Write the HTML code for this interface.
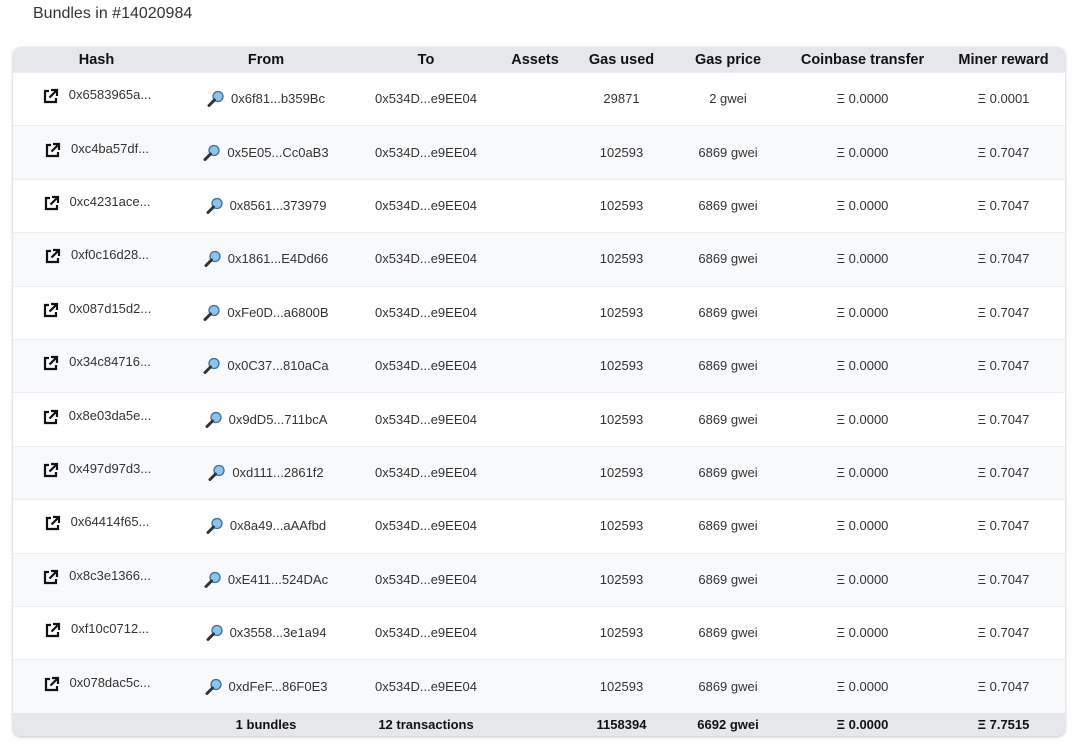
<!DOCTYPE html>
<html><head><meta charset="utf-8"><style>
body{margin:0;background:#fff;font-family:"Liberation Sans",Arial,sans-serif;color:#222;width:1080px;height:751px;overflow:hidden}
h1{position:absolute;left:33px;top:5px;margin:0;font-size:16px;font-weight:normal;color:#333}
.t{position:absolute;left:13px;top:47px;width:1052px;border-radius:8px;overflow:hidden;box-shadow:0 1px 3px rgba(0,0,0,.25)}
table{border-collapse:collapse;width:1052px;table-layout:fixed;font-size:13px}
th{background:#e5e7eb;height:25px;font-weight:bold;font-size:14.5px;padding:0;color:#111}
td{height:53.4px;box-sizing:border-box;text-align:center;padding:0;border-top:1px solid #ebedf0;color:#333;line-height:16px}
td div{height:16px;overflow:visible}
tr:nth-child(even) td{background:#f8f9fb}
tfoot td{background:#e5e7eb!important;height:23px;font-weight:bold;color:#111;border:none}
.ic{display:inline-block;vertical-align:top;margin-right:10px}
</style></head><body>
<h1>Bundles in #14020984</h1>
<div class="t"><table>
<colgroup><col style="width:167px"><col style="width:172px"><col style="width:148px"><col style="width:70px"><col style="width:103px"><col style="width:110px"><col style="width:159px"><col style="width:123px"></colgroup>
<thead><tr><th>Hash</th><th>From</th><th>To</th><th>Assets</th><th>Gas used</th><th>Gas price</th><th>Coinbase transfer</th><th>Miner reward</th></tr></thead>
<tbody id="b"></tbody>
<tfoot><tr><td></td><td>1 bundles</td><td>12 transactions</td><td></td><td>1158394</td><td>6692 gwei</td><td>Ξ 0.0000</td><td>Ξ 7.7515</td></tr></tfoot>
</table></div>
<script>
var d=[["0x6583965a...","0x6f81...b359Bc","29871","2 gwei","Ξ 0.0001"],["0xc4ba57df...","0x5E05...Cc0aB3"],["0xc4231ace...","0x8561...373979"],["0xf0c16d28...","0x1861...E4Dd66"],["0x087d15d2...","0xFe0D...a6800B"],["0x34c84716...","0x0C37...810aCa"],["0x8e03da5e...","0x9dD5...711bcA"],["0x497d97d3...","0xd111...2861f2"],["0x64414f65...","0x8a49...aAAfbd"],["0x8c3e1366...","0xE411...524DAc"],["0xf10c0712...","0x3558...3e1a94"],["0x078dac5c...","0xdFeF...86F0E3"]];
var ext='<svg class="ic" style="margin-top:1px" width="17" height="17" viewBox="0 0 17 17" fill="none" stroke="#111" stroke-width="2.2"><path d="M7 3H3v11h11v-4"/><path d="M9 2h6v6M15 2L7.5 9.5"/></svg>';
var mag='<svg class="ic" style="margin-right:6px;margin-top:-1px" width="18" height="17" viewBox="0 0 18 17"><circle cx="11" cy="6.5" r="5" fill="#8ec3ec" stroke="#3a6f99" stroke-width="1.3"/><path d="M7.5 10L2 15.5" stroke="#333" stroke-width="3" stroke-linecap="round"/></svg>';
var h="";d.forEach(function(r){h+='<tr><td><div style="position:relative;top:-4px">'+ext+r[0]+'</div></td><td><div>'+mag+r[1]+'</div></td><td>0x534D...e9EE04</td><td></td><td>'+(r[2]||"102593")+'</td><td>'+(r[3]||"6869 gwei")+'</td><td>Ξ 0.0000</td><td>'+(r[4]||"Ξ 0.7047")+'</td></tr>';});
document.getElementById("b").innerHTML=h;
</script>
</body></html>
